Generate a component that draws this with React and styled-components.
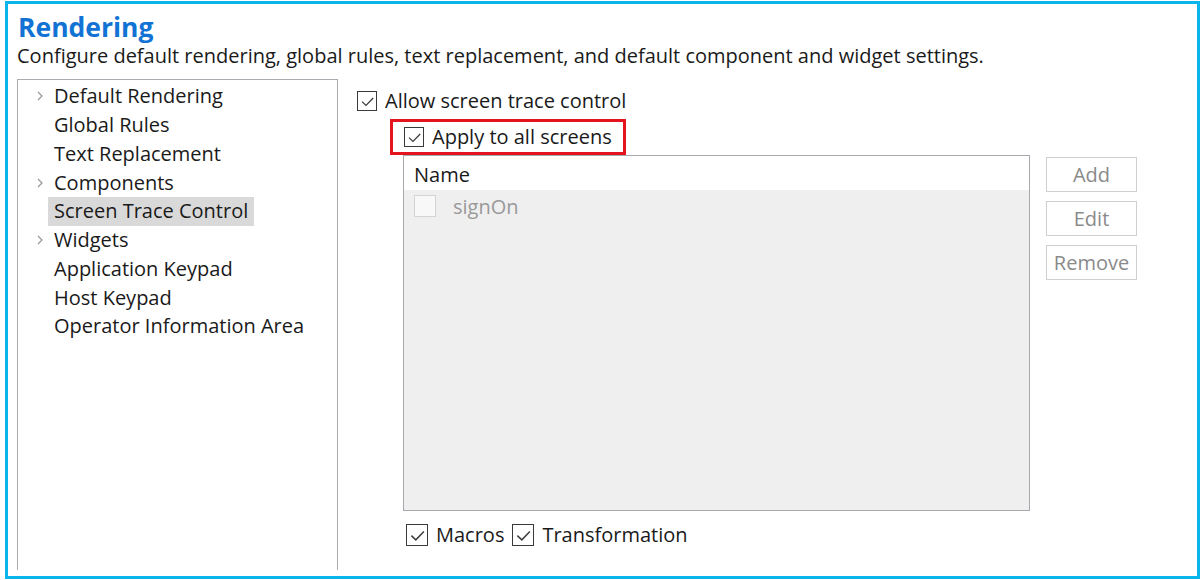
import React from "react";
import styled, { createGlobalStyle } from "styled-components";

const GlobalStyle = createGlobalStyle`
  html, body {
    margin: 0;
    padding: 0;
    background: #ffffff;
  }
  body {
    font-family: "Open Sans", "Noto Sans", "Liberation Sans", sans-serif;
    color: #1a1a1a;
  }
`;

const treeItems = [
  { label: "Default Rendering", expandable: true },
  { label: "Global Rules" },
  { label: "Text Replacement" },
  { label: "Components", expandable: true },
  { label: "Screen Trace Control", selected: true },
  { label: "Widgets", expandable: true },
  { label: "Application Keypad" },
  { label: "Host Keypad" },
  { label: "Operator Information Area" },
];

function CheckBox({ checked, disabled, size = 20 }) {
  return (
    <Box $disabled={disabled} $size={size}>
      {checked && (
        <svg width={size - 3} height={size - 3} viewBox="0 0 17 17">
          <path d="M3 8.6 L7 12.4 L14.2 5" fill="none" stroke="#3c3c3c" strokeWidth="1.3" />
        </svg>
      )}
    </Box>
  );
}

function Chevron() {
  return (
    <svg width="8" height="12" viewBox="0 0 8 12">
      <path d="M2 2 L6 6 L2 10" fill="none" stroke="#9a9a9a" strokeWidth="1.3" />
    </svg>
  );
}

export default function App() {
  return (
    <>
      <GlobalStyle />
      <Frame>
        <Title>Rendering</Title>
        <Description>
          Configure default rendering, global rules, text replacement, and default component and widget settings.
        </Description>
        <Body>
          <Tree>
            {treeItems.map((item) => (
              <TreeRow key={item.label}>
                <Arrow>{item.expandable && <Chevron />}</Arrow>
                <TreeLabel $selected={item.selected}>{item.label}</TreeLabel>
              </TreeRow>
            ))}
          </Tree>
          <Pane>
            <CheckRow>
              <CheckBox checked />
              <span>Allow screen trace control</span>
            </CheckRow>
            <Highlight>
              <CheckBox checked />
              <span>Apply to all screens</span>
            </Highlight>
            <TableArea>
              <Table>
                <HeaderCell>Name</HeaderCell>
                <DataRow>
                  <CheckBox disabled size={22} />
                  <span>signOn</span>
                </DataRow>
              </Table>
              <Buttons>
                <Button>Add</Button>
                <Button>Edit</Button>
                <Button>Remove</Button>
              </Buttons>
            </TableArea>
            <Options>
              <CheckRow>
                <CheckBox checked size={22} />
                <span>Macros</span>
              </CheckRow>
              <CheckRow>
                <CheckBox checked size={22} />
                <span>Transformation</span>
              </CheckRow>
            </Options>
          </Pane>
        </Body>
      </Frame>
    </>
  );
}

const Frame = styled.div`
  box-sizing: border-box;
  margin: 1px 0 0 5px;
  width: 1195px;
  height: 578px;
  border: 3px solid #0ab4ec;
  padding: 7px 0 0 9px;
  display: flex;
  flex-direction: column;
`;

const Title = styled.h1`
  margin: 0 0 0 1px;
  font-size: 26.5px;
  line-height: 32px;
  font-weight: 700;
  color: #1273d4;
`;

const Description = styled.div`
  margin: 0;
  font-size: 20px;
  line-height: 26px;
  color: #1a1a1a;
`;

const Body = styled.div`
  display: flex;
  flex: 1;
  margin-top: 10px;
  min-height: 0;
  padding-bottom: 6px;
`;

const Tree = styled.div`
  box-sizing: border-box;
  width: 321px;
  border: 1.5px solid #a8abb0;
  border-bottom: none;
  padding: 2px 0 0 14px;
`;

const TreeRow = styled.div`
  display: flex;
  align-items: center;
  height: 28.75px;
  font-size: 20px;
`;

const Arrow = styled.span`
  width: 16px;
  display: flex;
  align-items: center;
  justify-content: center;
`;

const TreeLabel = styled.span`
  margin-left: ${(p) => (p.$selected ? "0" : "6px")};
  padding: ${(p) => (p.$selected ? "1px 6px 2px" : "0")};
  line-height: 26px;
  background: ${(p) => (p.$selected ? "#d9d9d9" : "transparent")};
`;

const Pane = styled.div`
  flex: 1;
  padding: 11px 0 0 19px;
  display: flex;
  flex-direction: column;
`;

const CheckRow = styled.label`
  display: flex;
  align-items: center;
  gap: 8px;
  font-size: 20px;
  line-height: 22px;
`;

const Box = styled.span`
  box-sizing: border-box;
  width: ${(p) => p.$size}px;
  height: ${(p) => p.$size}px;
  border: 1.5px solid ${(p) => (p.$disabled ? "#d4d4d4" : "#3a3a3a")};
  background: ${(p) => (p.$disabled ? "#f8f8f8" : "#fff")};
  display: flex;
  align-items: center;
  justify-content: center;
  flex-shrink: 0;
`;

const Highlight = styled(CheckRow)`
  align-self: flex-start;
  margin: 7px 0 0 33px;
  border: 3px solid #e3141e;
  padding: 4px 11px 4px 11px;
`;

const TableArea = styled.div`
  display: flex;
  gap: 16px;
  margin-left: 46px;
`;

const Table = styled.div`
  box-sizing: border-box;
  width: 627px;
  height: 356px;
  border: 1.5px solid #a6a9ae;
  background: #efefef;
  display: flex;
  flex-direction: column;
`;

const HeaderCell = styled.div`
  background: #fff;
  height: 34px;
  display: flex;
  align-items: center;
  padding: 3px 0 0 10px;
  box-sizing: border-box;
  font-size: 20px;
`;

const DataRow = styled.div`
  display: flex;
  align-items: center;
  gap: 17px;
  height: 32px;
  padding-left: 10px;
  font-size: 20px;
  color: #999;
`;

const Buttons = styled.div`
  display: flex;
  flex-direction: column;
  gap: 9px;
  padding-top: 2px;
`;

const Button = styled.button`
  box-sizing: border-box;
  width: 91px;
  height: 35px;
  border: 1.5px solid #cfcfcf;
  background: #fff;
  color: #8a8a8a;
  font-family: inherit;
  font-size: 20px;
  padding: 0;
`;

const Options = styled.div`
  display: flex;
  gap: 8px;
  margin: 13px 0 0 49px;
`;
